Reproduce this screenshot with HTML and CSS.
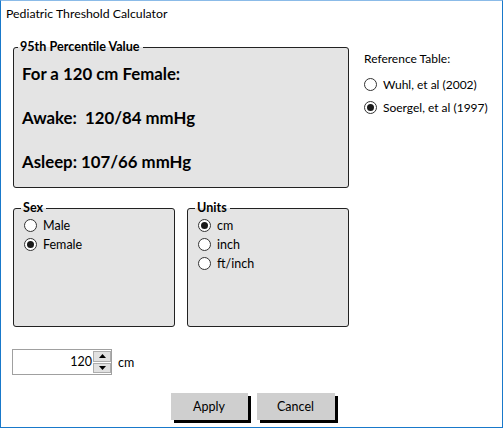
FILE: index.html
```html
<!DOCTYPE html>
<html>
<head>
<meta charset="utf-8">
<link rel="stylesheet" href="styles.css">
</head>
<body>
<div class="window">
  <div class="title">Pediatric Threshold Calculator</div>
  <div class="main">
    <div class="left">
      <fieldset class="group result">
        <legend>95th Percentile Value</legend>
        <div class="result-lines">
          <div>For a 120 cm Female:</div>
          <div>Awake:&nbsp; 120/84 mmHg</div>
          <div>Asleep: 107/66 mmHg</div>
        </div>
      </fieldset>
      <div class="pair">
        <fieldset class="group small">
          <legend>Sex</legend>
          <div class="opt"><span class="radio"></span>Male</div>
          <div class="opt"><span class="radio on"></span>Female</div>
        </fieldset>
        <fieldset class="group small">
          <legend>Units</legend>
          <div class="opt"><span class="radio on"></span>cm</div>
          <div class="opt"><span class="radio"></span>inch</div>
          <div class="opt"><span class="radio"></span>ft/inch</div>
        </fieldset>
      </div>
      <div class="height-row">
        <div class="spin">
          <div class="spin-value">120</div>
          <div class="spin-btns">
            <div class="spin-btn"><svg width="7" height="4" viewBox="0 0 7 4"><path d="M0 4 L3.5 0 L7 4 Z" fill="#000"/></svg></div>
            <div class="spin-btn"><svg width="7" height="4" viewBox="0 0 7 4"><path d="M0 0 L3.5 4 L7 0 Z" fill="#000"/></svg></div>
          </div>
        </div>
        <span class="unit">cm</span>
      </div>
    </div>
    <div class="right">
      <div class="ref-label">Reference Table:</div>
      <div class="ref-opt"><span class="radio"></span>Wuhl, et al (2002)</div>
      <div class="ref-opt"><span class="radio on"></span>Soergel, et al (1997)</div>
    </div>
  </div>
  <div class="buttons">
    <div class="btn apply">Apply</div>
    <div class="btn cancel">Cancel</div>
  </div>
</div>
</body>
</html>
```
FILE: styles.css
```css
* { box-sizing: border-box; }
html, body { margin: 0; padding: 0; background: #fff; }
body {
  font-family: Lato, "Open Sans", sans-serif;
  font-size: 12px;
  color: #000;
}
.window {
  width: 503px;
  height: 428px;
  border: 1px solid #1979ca;
  border-top-color: #8bbbe8;
  position: relative;
}
.title {
  padding: 5px 0 0 5px;
  line-height: 16px;
  height: 21px;
  font-size: 12.3px;
}
.main {
  display: flex;
  margin-top: 17px;
}
.left {
  margin-left: 12px;
  width: 336px;
}
.group {
  margin: 0;
  border: 1px solid #222;
  border-radius: 3px;
  background: #e4e4e4;
  padding: 0 8px 2px 8px;
  min-width: 0;
}
.group legend {
  font-weight: bold;
  font-size: 12.6px;
  line-height: 16px;
  padding: 0 3px 0 2px;
  margin-left: -4px;
}
.result { height: 149px; }
.result-lines {
  margin-top: -3px;
  font-size: 16.8px;
  font-weight: bold;
  line-height: 44px;
}
.pair {
  display: flex;
  gap: 12px;
  margin-top: 12px;
}
.small {
  width: 162px;
  height: 127px;
  padding-left: 10px;
}
.small legend { margin-left: -3px; }
.opt {
  display: flex;
  align-items: center;
  height: 19px;
  font-size: 12.5px;
}
.radio {
  width: 13px;
  height: 13px;
  border: 1px solid #333;
  border-radius: 50%;
  background: #fff;
  margin-right: 6px;
  display: flex;
  align-items: center;
  justify-content: center;
  flex: none;
}
.radio.on::after {
  content: "";
  width: 7px;
  height: 7px;
  border-radius: 50%;
  background: #1a1a1a;
}
.height-row {
  display: flex;
  align-items: center;
  margin-top: 22px;
  margin-left: -1px;
}
.spin {
  width: 100px;
  height: 26px;
  border: 1px solid #a0a0a0;
  background: #fff;
  display: flex;
  align-items: stretch;
}
.spin-value {
  flex: 1;
  text-align: right;
  line-height: 24px;
  padding-right: 1px;
  font-size: 12.5px;
}
.spin-btns {
  width: 18px;
  display: flex;
  flex-direction: column;
  gap: 1px;
  padding: 1px 0;
}
.spin-btn {
  flex: 1;
  background: #e1e1e1;
  border: 1px solid #adadad;
  display: flex;
  align-items: center;
  justify-content: center;
}
.unit { margin-left: 6px; font-size: 12.5px; }
.right {
  margin-left: 15px;
  padding-top: 11px;
}
.ref-label { line-height: 18px; margin-bottom: 5px; }
.ref-opt {
  display: flex;
  align-items: center;
  height: 23px;
}
.buttons {
  display: flex;
  justify-content: center;
  gap: 9px;
  margin-top: 18px;
  margin-left: 2px;
}
.btn {
  height: 27px;
  background: #cfcfcf;
  box-shadow: 3px 3px 0 #000;
  text-align: center;
  line-height: 27px;
  font-size: 12.5px;
}
.apply { width: 77px; }
.cancel { width: 78px; }
```
